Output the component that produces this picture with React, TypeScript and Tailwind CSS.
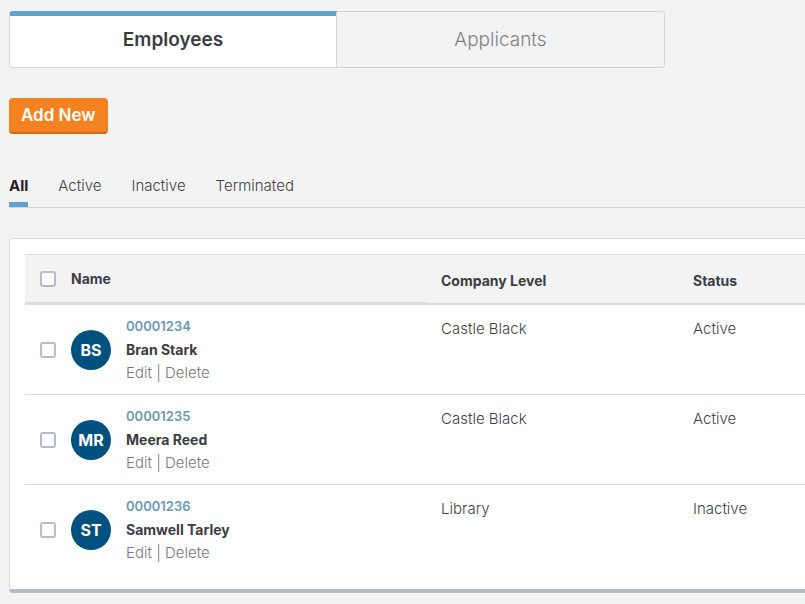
// src/pages/Employees.tsx
// Employee list: section tabs, status filters and the employee table.
import { useState } from "react";
import clsx from "clsx";

type Employee = {
  id: string;
  name: string;
  initials: string;
  level: string;
  status: "Active" | "Inactive" | "Terminated";
};

const EMPLOYEES: Employee[] = [
  { id: "00001234", name: "Bran Stark", initials: "BS", level: "Castle Black", status: "Active" },
  { id: "00001235", name: "Meera Reed", initials: "MR", level: "Castle Black", status: "Active" },
  { id: "00001236", name: "Samwell Tarley", initials: "ST", level: "Library", status: "Inactive" },
];

const SECTIONS = ["Employees", "Applicants"];
const FILTERS = ["All", "Active", "Inactive", "Terminated"];

function SectionTabs({ value, onChange }: { value: string; onChange: (v: string) => void }) {
  return (
    <div role="tablist" className="mr-[9px] grid h-[57px] max-w-[656px] grid-cols-2 overflow-hidden rounded-[3px]">
      {SECTIONS.map((s, i) => (
        <button
          key={s}
          type="button"
          role="tab"
          aria-selected={s === value}
          onClick={() => onChange(s)}
          className={clsx(
            "flex items-center justify-center border-b border-r border-[#d3d6d9] text-[19px]",
            i === 0 && "rounded-l-[3px] border-l",
            i === SECTIONS.length - 1 && "rounded-r-[3px]",
            s === value
              ? "border-t-[5px] border-t-[#62a2d0] bg-white pb-1 font-semibold text-[#3a3d41]"
              : "border-t font-light text-[#808285]",
          )}
        >
          {s}
        </button>
      ))}
    </div>
  );
}

function FilterTabs({ value, onChange }: { value: string; onChange: (v: string) => void }) {
  return (
    <div role="tablist" className="flex gap-[30px] border-b border-[#d3d6d9] text-[15px] leading-5">
      {FILTERS.map((f) => (
        <button
          key={f}
          type="button"
          role="tab"
          aria-selected={f === value}
          onClick={() => onChange(f)}
          className={clsx(
            "border-b-[5px] pb-1.5",
            f === value ? "border-[#62a2d0] font-bold text-[#1f2123]" : "border-transparent font-light",
          )}
        >
          {f}
        </button>
      ))}
    </div>
  );
}

function Checkbox({ label, checked, onChange }: { label: string; checked: boolean; onChange: () => void }) {
  return (
    <input
      type="checkbox"
      aria-label={label}
      checked={checked}
      onChange={onChange}
      className="size-4 shrink-0 appearance-none rounded-[3px] border-2 border-[#b7bcc7] bg-white checked:bg-[#62a2d0]"
    />
  );
}

function EmployeeRow({ e, checked, onToggle }: { e: Employee; checked: boolean; onToggle: () => void }) {
  return (
    <tr className="group align-top text-[15px] leading-[23px]">
      <td className="border-b border-[#d8dadc] px-[15px] py-2.5 group-last:border-b-0">
        <div className="flex items-center gap-[15px]">
          <Checkbox label={`Select ${e.name}`} checked={checked} onChange={onToggle} />
          <span className="flex size-10 shrink-0 items-center justify-center rounded-full bg-[#00517f] text-base font-bold text-white">
            {e.initials}
          </span>
          <div>
            <div className="text-[13px] leading-[23px] font-semibold text-[#6a9ab4]">{e.id}</div>
            <div className="text-[14px] leading-[23px] font-bold text-[#3a3d41]">{e.name}</div>
            <div className="font-light text-[#77797c]">
              <a href="#edit">Edit</a> | <a href="#delete">Delete</a>
            </div>
          </div>
        </div>
      </td>
      <td className="border-b border-[#d8dadc] px-[15px] py-3 font-light group-last:border-b-0">{e.level}</td>
      <td className="border-b border-[#d8dadc] px-[15px] py-3 font-light group-last:border-b-0">{e.status}</td>
    </tr>
  );
}

export default function App() {
  const [section, setSection] = useState("Employees");
  const [filter, setFilter] = useState("All");
  const [selected, setSelected] = useState<string[]>([]);

  const rows = filter === "All" ? EMPLOYEES : EMPLOYEES.filter((e) => e.status === filter);
  const allSelected = selected.length === EMPLOYEES.length;

  function toggle(id: string) {
    setSelected((s) => (s.includes(id) ? s.filter((x) => x !== id) : [...s, id]));
  }

  return (
    <main className="min-h-screen bg-[#f3f3f3] pb-2.5 pl-[9px] pt-[11px] font-['Inter',sans-serif] text-sm text-[#3f4246]">
      <SectionTabs value={section} onChange={setSection} />

      <button
        type="button"
        className="mb-[42px] mt-[30px] h-9 rounded-[4px] border-b-2 border-[#cc6a1b] bg-[#f58220] px-3 text-[17px] font-semibold text-white"
      >
        Add New
      </button>

      <FilterTabs value={filter} onChange={setFilter} />

      <section className="mt-[30px] overflow-hidden rounded-l-[4px] border-y border-l border-b-4 border-[#d8dadc] border-b-[#b4bcc6] bg-white pb-[15px] pl-[15px] pt-[15px]">
        <table className="w-full table-fixed border-separate border-spacing-0">
          <thead>
            <tr className="h-[51px] bg-[#f3f3f3] text-left text-[#3a3d41]">
              <th className="w-[401px] border-b-[3px] border-t border-[#dadbdc] px-[15px] font-bold">
                <div className="flex items-center gap-[15px]">
                  <Checkbox
                    label="Select all"
                    checked={allSelected}
                    onChange={() => setSelected(allSelected ? [] : EMPLOYEES.map((e) => e.id))}
                  />
                  Name
                </div>
              </th>
              <th className="w-[252px] border-b-2 border-t border-[#dadbdc] px-[15px] pt-1 font-bold">
                Company Level
              </th>
              <th className="border-b-2 border-t border-[#dadbdc] px-[15px] pt-1 font-bold">Status</th>
            </tr>
          </thead>
          <tbody>
            {rows.map((e) => (
              <EmployeeRow key={e.id} e={e} checked={selected.includes(e.id)} onToggle={() => toggle(e.id)} />
            ))}
          </tbody>
        </table>
      </section>
    </main>
  );
}
